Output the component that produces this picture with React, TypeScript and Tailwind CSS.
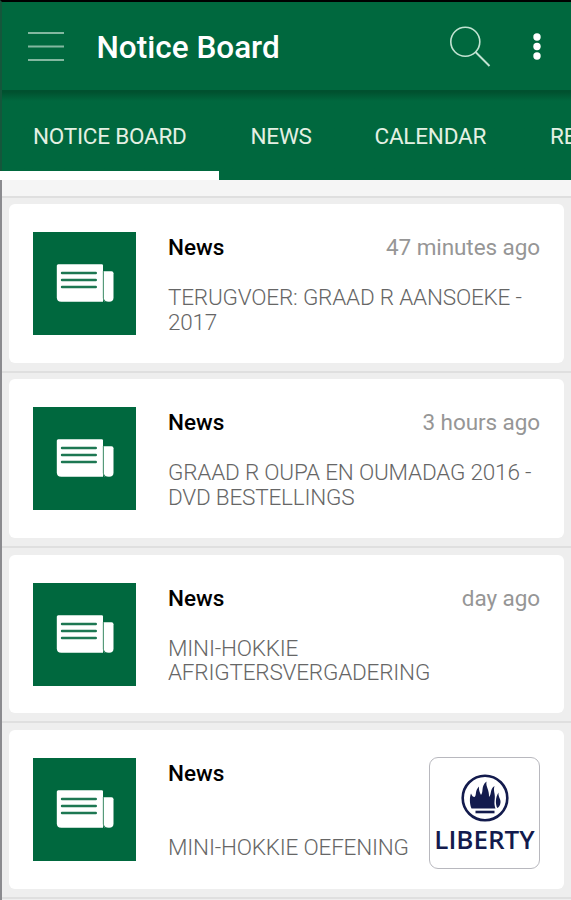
import React from "react";

function NewsIcon() {
  return (
    <svg className="block h-[103px] w-[103px] shrink-0 bg-[#00683e]" viewBox="0 0 103 103">
      <path d="M25.300 32.300h43.500q1.200 0 1.200 1.200V69.800H28.300q-4.500 0-4.500-4.500V33.800q0-1.500 1.500-1.500z" fill="#fff" />
      <path d="M70.800 39.300h7.700q2 0 2 2v24.500q0 4-4.500 4-5.200 0-5.200-4z" fill="#fff" />
      <path d="M70.300 39v27q.2 3 2 4" fill="none" stroke="#5f9f80" strokeWidth="1" />
      <path d="M29 41h33.800M29 48h33.800M29 55h33.800" stroke="#1d7752" strokeWidth="2.400" strokeLinecap="round" />
    </svg>
  );
}

function LibertyLogo() {
  return (
    <div className="-mt-[1px] flex h-[112px] w-[111px] shrink-0 flex-col items-center rounded-[9px] border border-[#b8b8be] bg-white pt-[16px]">
      <svg className="block h-[48px] w-[48px] shrink-0" viewBox="0 0 48 48">
        <circle cx="24" cy="24" r="22.300" fill="none" stroke="#131b4d" strokeWidth="2.600" />
        <path d="M10.500 34.500C8.500 30 8.500 23 10 19.500c1 2.500 2 3.500 3.500 3.500 2.500-2 0-6 4.500-10.500-.5 4 1 6 2 8.500 3-4-.5-8.500 5.500-13.500-1 5.500 3 8 2.500 15.500 3-3 .5-7.500 5.500-11-1.500 5 .8 7.500.3 12-.3 4-.8 6 .7 10.500z" fill="#131b4d" />
        <path d="M37.500 18.500c-.5 4.500 2.500 6.500 2 10-.3 3-1.500 4.500-3.200 5.500-2-4-2-10.500 1.200-15.500z" fill="#131b4d" />
        <path d="M14.500 38h19" stroke="#131b4d" strokeWidth="2.600" />
      </svg>
      <span className="mt-[1px] whitespace-nowrap font-['Open_Sans',sans-serif] text-[26px] font-semibold leading-[32px] text-[#131b4d]">LIBERTY</span>
    </div>
  );
}

type Notice = { time?: string; lines: string[]; sponsored?: boolean };

const notices: Notice[] = [
  { time: "47 minutes ago", lines: ["TERUGVOER: GRAAD R AANSOEKE -", "2017"] },
  { time: "3 hours ago", lines: ["GRAAD R OUPA EN OUMADAG 2016 -", "DVD BESTELLINGS"] },
  { time: "day ago", lines: ["MINI-HOKKIE", "AFRIGTERSVERGADERING"] },
  { lines: ["MINI-HOKKIE OEFENING"], sponsored: true },
];

function Card({ notice }: { notice: Notice }) {
  return (
    <div className="h-[175.300px] border-t-2 border-[#dfdfdf] px-[7px] pt-[6.700px]">
      <article className="flex h-[158.500px] rounded-[6px] bg-white px-[24px] pt-[28px]">
        <NewsIcon />
        <div className="ml-[32px] min-w-0 flex-1">
          <div className="flex justify-between text-[22.500px] leading-[30px]">
            <h2 className="font-medium text-black">News</h2>
            {notice.time && <time className="tracking-[-0.080px] text-[#969696]">{notice.time}</time>}
          </div>
          <p className={"whitespace-nowrap text-[22.500px] font-light leading-[24.700px] tracking-[-0.190px] text-[#666] " + (notice.sponsored ? "mt-[46.500px]" : "mt-[23px]")}>
            {notice.lines.map((line) => (
              <span key={line} className="block">{line}</span>
            ))}
          </p>
        </div>
        {notice.sponsored && <LibertyLogo />}
      </article>
    </div>
  );
}

export default function App() {
  return (
    <div className="flex h-[900px] w-[571px] flex-col overflow-hidden bg-[#eee] font-['Roboto',sans-serif]">
      <header className="flex h-[90px] shrink-0 items-start border-l-2 border-t-2 border-l-[#15563b] border-t-black bg-[#00683e]">
        <svg className="ml-[26px] mt-[29px] block h-[32px] w-[36px]" viewBox="0 0 36 32">
          <path d="M0 2h36M0 15.500h36M0 29h36" stroke="#83b8a0" strokeWidth="2" />
        </svg>
        <h1 className="ml-[32.500px] mt-[26px] whitespace-nowrap text-[31.500px] font-medium leading-[40px] text-white">Notice Board</h1>
        <svg className="ml-auto mt-[23px] block h-[44px] w-[42px]" viewBox="0 0 42 44">
          <circle cx="16.300" cy="16.700" r="14.500" fill="none" stroke="#c2e3d2" strokeWidth="1.600" />
          <path d="M26.500 27L40.500 41" stroke="#c2e3d2" strokeWidth="2" />
        </svg>
        <svg className="ml-[41px] mr-[29px] mt-[30px] block h-[30px] w-[10px]" viewBox="0 0 10 30">
          <circle cx="5" cy="5" r="3.700" fill="#fff" />
          <circle cx="5" cy="14.500" r="3.700" fill="#fff" />
          <circle cx="5" cy="24" r="3.700" fill="#fff" />
        </svg>
      </header>
      <nav className="flex h-[89.500px] shrink-0 bg-[#00683e] bg-linear-to-b from-[#00512f] from-[2px] to-[#00683e] to-[11px] text-[22.500px] leading-[30px] tracking-[-0.230px] text-[#e4f0e3]">
        <div className="flex h-full w-[218.500px] shrink-0 flex-col">
          <span className="flex-1 whitespace-nowrap border-l-2 border-[#15563b] pl-[31px] pt-[31px]">NOTICE BOARD</span>
          <div className="h-[8.500px] bg-white" />
        </div>
        <span className="ml-[32px] w-[124px] shrink-0 pt-[31px]">NEWS</span>
        <span className="w-[175.500px] shrink-0 pt-[31px]">CALENDAR</span>
        <span className="shrink-0 pt-[31px]">RE</span>
      </nav>
      <main className="flex-1 border-l-2 border-[#8b8b8f] bg-[#eee]">
        <div className="h-[16px] bg-[#f5f5f5]" />
        {notices.map((notice) => (
          <Card key={notice.lines[0]} notice={notice} />
        ))}
        <div className="h-[6px] border-t-2 border-[#dfdfdf]" />
      </main>
    </div>
  );
}
